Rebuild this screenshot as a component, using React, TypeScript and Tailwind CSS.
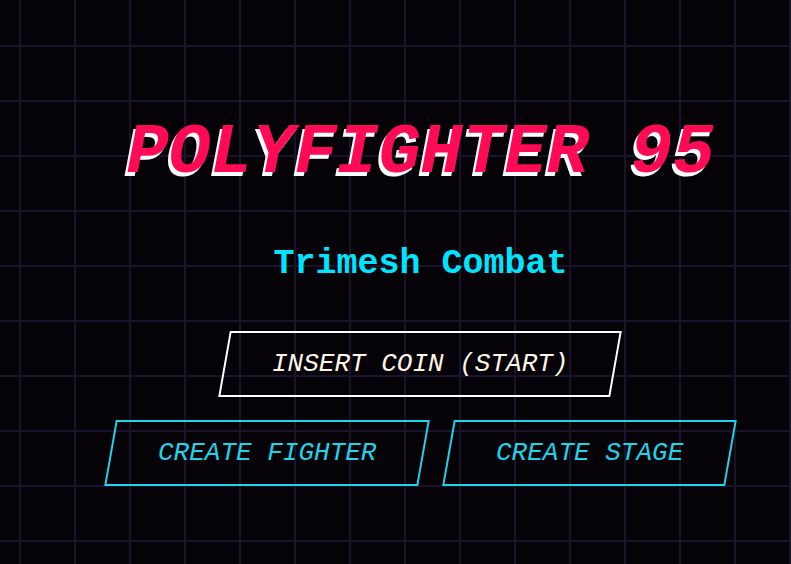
export default function App() {
  return (
    <main className="min-h-screen w-full bg-[#050308] bg-[linear-gradient(to_right,#19142b_2px,transparent_2px),linear-gradient(to_bottom,#19142b_2px,transparent_2px)] bg-[size:55px_55px] bg-[position:19px_45px] font-['Liberation_Mono',monospace]">
      <div className="flex flex-col items-center pl-[50px] pt-[119px]">
        <h1 className="text-[70px] leading-none font-bold italic text-[#ff0a55] [text-shadow:-3px_4px_0_#ffffff]">
          POLYFIGHTER 95
        </h1>

        <p className="mt-[58px] text-[35px] leading-none font-bold text-[#00e5ff]">
          Trimesh Combat
        </p>

        <div className="mt-[49px] flex flex-col items-center gap-[23px]">
          <button className="-skew-x-[10deg] border-2 border-white px-[46px] py-4 cursor-pointer">
            <span className="block skew-x-[10deg] text-[26px] leading-[30px] italic text-[#fff6e6]">
              INSERT COIN (START)
            </span>
          </button>

          <div className="flex gap-6">
            <button className="-skew-x-[10deg] border-2 border-[#1fd3e8] px-[46px] py-4 cursor-pointer">
              <span className="block skew-x-[10deg] text-[26px] leading-[30px] italic text-[#1fd3e8]">
                CREATE FIGHTER
              </span>
            </button>
            <button className="-skew-x-[10deg] border-2 border-[#1fd3e8] px-[46px] py-4 cursor-pointer">
              <span className="block skew-x-[10deg] text-[26px] leading-[30px] italic text-[#1fd3e8]">
                CREATE STAGE
              </span>
            </button>
          </div>
        </div>
      </div>
    </main>
  );
}
